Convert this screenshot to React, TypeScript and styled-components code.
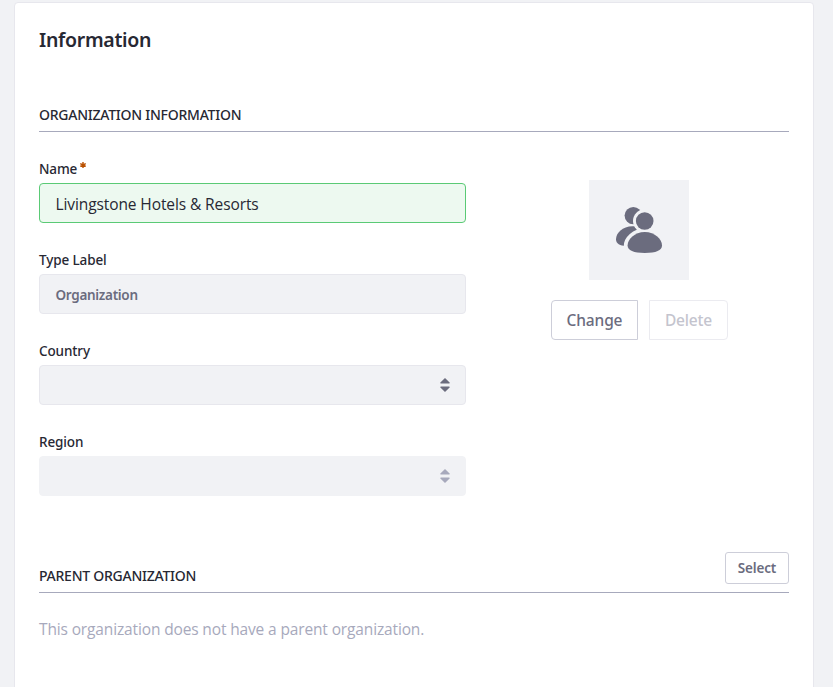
import React from 'react';
import styled, { createGlobalStyle } from 'styled-components';

const GlobalStyle = createGlobalStyle`
  *, *::before, *::after { box-sizing: border-box; }
  body {
    margin: 0;
    background: #f1f2f5;
    color: #272833;
    font-family: "Segoe UI", "Noto Sans", "Open Sans", sans-serif;
    font-size: 16px;
    overflow: hidden;
  }
`;

const Page = styled.main`
  height: 687px;
  padding: 2px 19px 0 14px;
  overflow: hidden;
`;

const Sheet = styled.section`
  height: 760px;
  padding: 23px 24px;
  background: #fff;
  border: 1px solid #e7e7ed;
  border-radius: 4px;
`;

const Title = styled.h2`
  margin: 0;
  height: 28px;
  font-size: 19.5px;
  line-height: 28px;
  font-weight: 600;
  letter-spacing: -0.3px;
`;

const SectionHeader = styled.div<{ $gap: number }>`
  display: flex;
  align-items: flex-end;
  justify-content: space-between;
  height: 41px;
  margin-top: ${(p) => p.$gap}px;
  padding-bottom: 8px;
  border-bottom: 1px solid #a7a9bc;
`;

const SectionTitle = styled.h3`
  margin: 0;
  font-size: 14px;
  line-height: 16px;
  font-weight: 500;
  text-transform: uppercase;
  letter-spacing: -0.25px;
`;

const Columns = styled.div`
  display: grid;
  grid-template-columns: 427px 1fr;
  column-gap: 24px;
  padding-top: 28px;
`;

const Fields = styled.div`
  display: flex;
  flex-direction: column;
  gap: 28px;
`;

const Field = styled.div`
  height: 63px;
`;

const Label = styled.label`
  display: flex;
  height: 23px;
  font-size: 13.5px;
  line-height: 19px;
  font-weight: 500;
  letter-spacing: -0.12px;
`;

const Required = styled.svg`
  width: 6px;
  height: 6px;
  margin: 2px 0 0 3px;
  fill: none;
  stroke: #b95000;
  stroke-width: 1.4;
`;

type Tone = 'valid' | 'plain' | 'disabled';

const borders: Record<Tone, string> = {
  valid: '#5aca75',
  plain: '#e7e7ed',
  disabled: '#f1f2f5',
};

const Control = styled.div<{ $tone: Tone }>`
  display: flex;
  align-items: center;
  height: 40px;
  padding: 2px 15px 0 16px;
  border: 1px solid ${(p) => borders[p.$tone]};
  border-radius: 4px;
  background: ${(p) => (p.$tone === 'valid' ? '#edf9f0' : '#f1f2f5')};
`;

const NameValue = styled.span`
  font-family: "Segoe UI", "Open Sans", sans-serif;
  font-size: 15.5px;
  line-height: 24px;
  letter-spacing: -0.1px;
  margin-left: -0.5px;
`;

const TypeValue = styled.span`
  font-size: 13.5px;
  line-height: 20px;
  font-weight: 600;
  letter-spacing: -0.3px;
  margin-left: -0.5px;
  color: #6b6c7e;
`;

const Arrows = styled.svg<{ $muted?: boolean }>`
  width: 10px;
  height: 14px;
  margin: -2px 0 0 auto;
  fill: ${(p) => (p.$muted ? '#a7a9bc' : '#6b6c7e')};
`;

const Picture = styled.div`
  display: flex;
  flex-direction: column;
  align-items: center;
  padding: 20px 0 0 0;
`;

const Avatar = styled.div`
  width: 100px;
  height: 100px;
  margin-right: 1px;
  background: #f1f2f5;
`;

const ButtonRow = styled.div`
  display: flex;
  gap: 11px;
  margin-top: 20px;
`;

const Button = styled.button<{ $small?: boolean; $width: number; $corners: string }>`
  flex: none;
  width: ${(p) => p.$width}px;
  height: ${(p) => (p.$small ? 32 : 40)}px;
  padding: 0;
  border: 1px solid #cdced9;
  border-radius: ${(p) => p.$corners};
  background: #fff;
  color: #6b6c7e;
  font-family: inherit;
  font-size: ${(p) => (p.$small ? 13.5 : 15.5)}px;
  line-height: 20px;
  font-weight: ${(p) => (p.$small ? 600 : 500)};
  letter-spacing: -0.15px;

  &:disabled {
    border-color: #ebebf0;
    color: #c4c4ce;
  }
`;

const SelectButton = styled(Button)`
  align-self: flex-start;
`;

const Empty = styled.p`
  margin: 24px 0 0;
  font-family: "Segoe UI", "Open Sans", sans-serif;
  font-size: 15.5px;
  line-height: 24px;
  color: #a7a9bc;
  letter-spacing: -0.14px;
`;

const UsersIcon = () => (
  <svg width="100" height="100" viewBox="0 0 100 100" fill="#6b6c7e">
    <mask id="behind">
      <rect width="100" height="100" fill="#fff" />
      <circle cx="55.7" cy="41" r="11.7" fill="#000" />
      <path
        d="M55.8 52C66 52 73 60 73 65.5c0 5-6 7.3-17.2 7.3s-17.2-2.3-17.2-7.3C38.6 60 45.5 52 55.8 52z"
        fill="#000"
        stroke="#000"
        strokeWidth="7.5"
      />
    </mask>
    <g mask="url(#behind)">
      <circle cx="44.3" cy="35.6" r="8.7" />
      <path d="M43.5 46.2C33.5 46.2 27 53 27 59.2c0 4.5 4 6.6 10 6.6h12V47.200c-2-.7-4-1-5.500-1z" />
    </g>
    <circle cx="55.7" cy="41" r="8.8" />
    <path d="M55.8 52.1C66 52.1 73 59.5 73 65.5c0 5-6 7.4-17.2 7.4s-17.2-2.4-17.2-7.4c0-6 7-13.4 17.200-13.4z" />
  </svg>
);

const SortArrows = ({ muted }: { muted?: boolean }) => (
  <Arrows $muted={muted} viewBox="0 0 10 14">
    <path d="M5 0l4.6 4.500q.6.900-.5.900H.9q-1.100 0-.5-.9zM5 14l4.600-4.500q.6-.9-.5-.9H.9q-1.100 0-.5.900z" />
  </Arrows>
);

export default function App() {
  return (
    <>
      <GlobalStyle />
      <Page>
        <Sheet>
          <Title>Information</Title>
          <SectionHeader $gap={37}>
            <SectionTitle>Organization Information</SectionTitle>
          </SectionHeader>
          <Columns>
            <Fields>
              <Field>
                <Label>
                  Name
                  <Required viewBox="0 0 6 6">
                    <path d="M3 0v6M.3 1.500l5.400 3M5.700 1.500l-5.400 3" />
                  </Required>
                </Label>
                <Control $tone="valid">
                  <NameValue>Livingstone Hotels &amp; Resorts</NameValue>
                </Control>
              </Field>
              <Field>
                <Label>Type Label</Label>
                <Control $tone="plain">
                  <TypeValue>Organization</TypeValue>
                </Control>
              </Field>
              <Field>
                <Label>Country</Label>
                <Control $tone="plain">
                  <SortArrows />
                </Control>
              </Field>
              <Field>
                <Label>Region</Label>
                <Control $tone="disabled">
                  <SortArrows muted />
                </Control>
              </Field>
            </Fields>
            <Picture>
              <Avatar>
                <UsersIcon />
              </Avatar>
              <ButtonRow>
                <Button $width={87} $corners="4px 0 0 4px">Change</Button>
                <Button $width={79} $corners="0 4px 4px 0" disabled>Delete</Button>
              </ButtonRow>
            </Picture>
          </Columns>
          <SectionHeader $gap={56}>
            <SectionTitle>Parent Organization</SectionTitle>
            <SelectButton $small $width={64} $corners="3px">Select</SelectButton>
          </SectionHeader>
          <Empty>This organization does not have a parent organization.</Empty>
        </Sheet>
      </Page>
    </>
  );
}
